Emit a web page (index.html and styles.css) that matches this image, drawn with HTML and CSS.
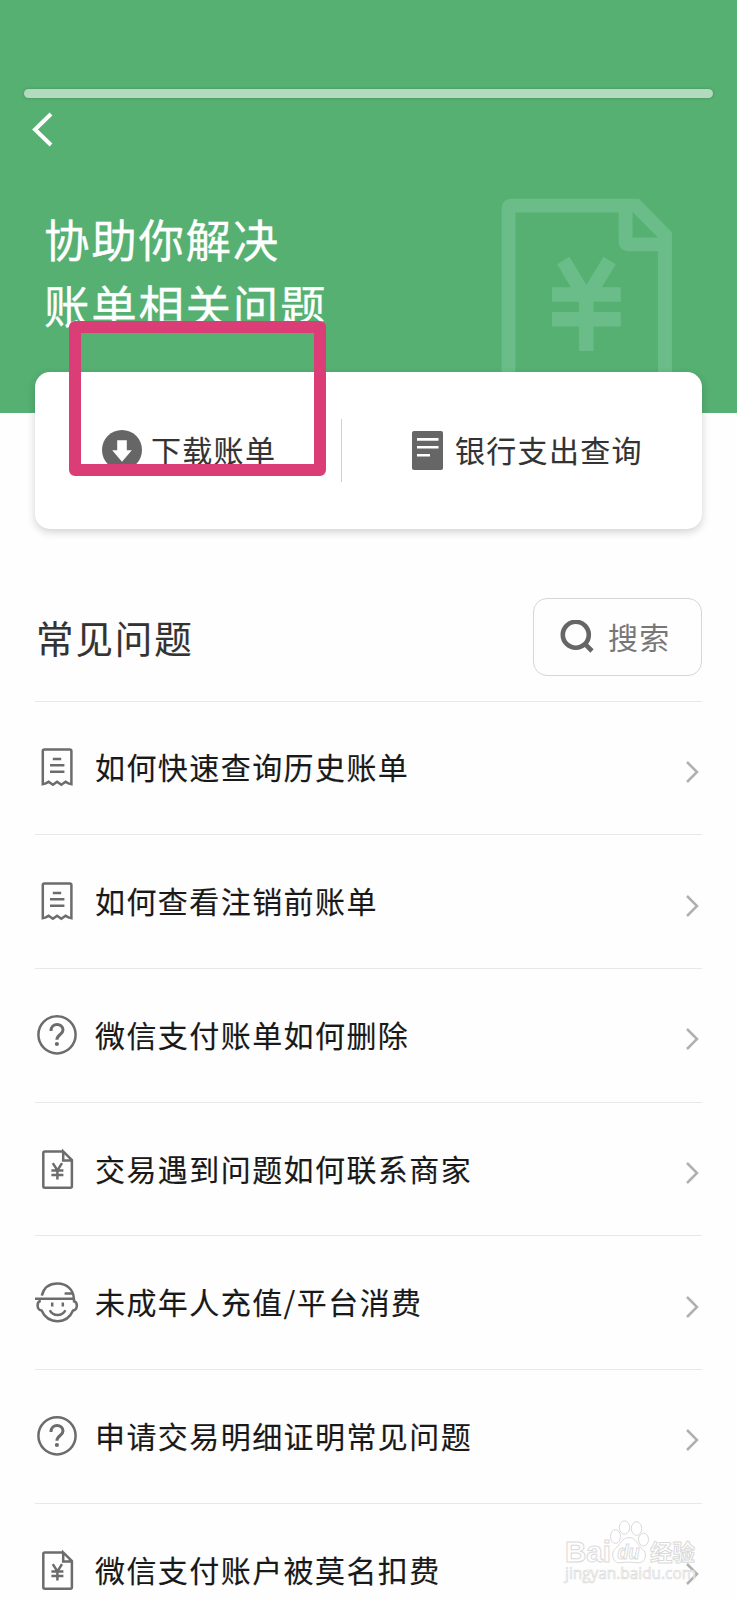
FILE: index.html
```
<!DOCTYPE html>
<html lang="zh-CN">
<head>
<meta charset="utf-8">
<title>账单</title>
<link rel="stylesheet" href="styles.css">
</head>
<body>
<svg class="defs" aria-hidden="true">
  <symbol id="receipt" viewBox="0 0 42 42">
    <path d="M7.8 37.2V4.2Q7.8 2.6 9.4 2.6H34.8Q36.4 2.6 36.4 4.2V37.2L33.4 36.4L30.6 34.8L26.3 37.8L22.1 34.8L17.9 37.8L13.6 34.8L10.8 36.4ZM17.8 12H26.2M15 18.2H29.4M15 24.8H29.4"/>
  </symbol>
  <symbol id="question" viewBox="0 0 42 42">
    <circle cx="22" cy="20.8" r="18.6"/>
    <path class="mark" d="M16 17C16 8.4 28 8.8 28 16C28 20.6 21.9 20.4 21.9 25.8"/>
    <circle class="dot" cx="21.9" cy="30" r="2.1"/>
  </symbol>
  <symbol id="bill" viewBox="0 0 42 42">
    <path d="M28.2 3.4H9.8Q8.3 3.4 8.3 4.9V38.2Q8.3 39.7 9.8 39.7H35.4Q36.9 39.7 36.9 38.2V12L28.2 3.4V12.4H36.9"/>
    <path d="M17.8 15.2L22.4 22.4L27 15.2M16.4 22.6H28.4M16.4 27H28.4M22.4 22.2V31.6"/>
  </symbol>
  <symbol id="kid" viewBox="0 0 44 42">
    <path d="M7.8 13.6C10 5.4 16 1.6 23.4 1.6C33 1.6 39.8 8 39.8 16.8M1 16.8H40M30.6 11.6H39M6.8 18.8C2.4 19.8 2.4 27.6 7.6 28.6C10.6 35.4 16 39.2 23.6 39.2C30.8 39.2 36.2 35.4 39 28.6C44 27.6 43.8 20 40 19.2V16.8M15.8 28.2C19 34.6 28.2 34.6 31.4 28.2"/>
    <path d="M18.2 20.6V24.4M28.8 20.6V24.4"/>
  </symbol>
</svg>

<header class="hero">
  <div class="progress"></div>
  <svg class="back" viewBox="0 0 24 36"><path d="M20 3L4 18.5L20 34"/></svg>
  <div class="hero-row">
    <h1 class="title">协助你解决<br>账单相关问题</h1>
    <svg class="hero-art" viewBox="0 0 171 215">
      <path d="M7.5 215V10Q7.5 7.7 10 7.7H135L164 37V215M124.6 7.7V44Q124.6 46.3 127 46.3H164"/>
      <path class="yen" d="M62.3 62.5L85.3 101L108.7 62.5M51 96.5H119.8M51 121.2H119.8M85.3 94V153"/>
    </svg>
  </div>
</header>

<main class="content">
  <section class="card">
    <div class="action action-download">
      <svg class="action-icon" viewBox="0 0 40 40"><circle cx="20" cy="20" r="20"/><path class="cut" d="M15.2 10.3H24.8V20.3H29.8L20 31.7L10.2 20.3H15.2Z"/></svg>
      <span class="action-label">下载账单</span>
    </div>
    <div class="divider"></div>
    <div class="action action-bank">
      <svg class="bank-icon" viewBox="0 0 31 39"><rect width="31" height="39" rx="2"/><path class="lines" d="M5 8.4H26.5M5 16.2H26.5M5 24.2H18"/></svg>
      <span class="action-label">银行支出查询</span>
    </div>
  </section>

  <div class="faq-head">
    <h2 class="faq-title">常见问题</h2>
    <div class="search">
      <svg class="search-icon" viewBox="0 0 34 34"><circle cx="15.8" cy="14.8" r="13"/><path d="M24.9 23.9L32 31"/></svg>
      <span class="search-label">搜索</span>
    </div>
  </div>

  <ul class="list">
    <li class="row"><svg class="icon"><use href="#receipt"/></svg><span class="label">如何快速查询历史账单</span><svg class="chev" viewBox="0 0 14 24"><path d="M2 2L12 12L2 22"/></svg></li>
    <li class="row"><svg class="icon"><use href="#receipt"/></svg><span class="label">如何查看注销前账单</span><svg class="chev" viewBox="0 0 14 24"><path d="M2 2L12 12L2 22"/></svg></li>
    <li class="row"><svg class="icon"><use href="#question"/></svg><span class="label">微信支付账单如何删除</span><svg class="chev" viewBox="0 0 14 24"><path d="M2 2L12 12L2 22"/></svg></li>
    <li class="row"><svg class="icon"><use href="#bill"/></svg><span class="label">交易遇到问题如何联系商家</span><svg class="chev" viewBox="0 0 14 24"><path d="M2 2L12 12L2 22"/></svg></li>
    <li class="row"><svg class="icon icon-kid"><use href="#kid"/></svg><span class="label">未成年人充值/平台消费</span><svg class="chev" viewBox="0 0 14 24"><path d="M2 2L12 12L2 22"/></svg></li>
    <li class="row"><svg class="icon"><use href="#question"/></svg><span class="label">申请交易明细证明常见问题</span><svg class="chev" viewBox="0 0 14 24"><path d="M2 2L12 12L2 22"/></svg></li>
    <li class="row"><svg class="icon"><use href="#bill"/></svg><span class="label">微信支付账户被莫名扣费</span><svg class="chev" viewBox="0 0 14 24"><path d="M2 2L12 12L2 22"/></svg></li>
  </ul>
</main>

<div class="highlight"></div>

<svg class="watermark" viewBox="0 0 140 68">
  <text class="wm-brand" x="1" y="42" textLength="46" lengthAdjust="spacingAndGlyphs">Bai</text>
  <ellipse cx="51.5" cy="16.5" rx="5" ry="6.8"/>
  <ellipse cx="60.5" cy="7.5" rx="5.2" ry="6.6"/>
  <ellipse cx="72.5" cy="8.5" rx="5.2" ry="6.8"/>
  <ellipse cx="79.5" cy="19.5" rx="5" ry="6.4"/>
  <path d="M65 17.5C58 17.5 56 25 51.5 28.5C46 33 49 43.5 56 42.8C62 42 68 42 74 42.8C82 43.5 84 33 78 28.5C73 25 72 17.5 65 17.5Z"/>
  <text class="wm-du" x="53.5" y="38.5" textLength="22" lengthAdjust="spacingAndGlyphs">du</text>
  <text class="wm-cn" x="86" y="41" textLength="45" lengthAdjust="spacingAndGlyphs">经验</text>
  <text class="wm-url" x="1" y="59" textLength="131" lengthAdjust="spacingAndGlyphs">jingyan.baidu.com</text>
</svg>
</body>
</html>
```

FILE: styles.css
```
* { box-sizing: border-box; }

body {
  margin: 0;
  position: relative;
  width: 737px;
  height: 1600px;
  overflow: hidden;
  background: #fefefe;
  color: #333;
  font-family: "Noto Sans CJK SC", sans-serif;
}

svg { display: block; flex: none; }
.defs { position: absolute; width: 0; height: 0; }

.hero {
  height: 413px;
  padding: 89px 24px 0;
  background: #56b072;
  overflow: hidden;
}

.progress {
  height: 9px;
  border-radius: 5px;
  background: #b4dabd;
  box-shadow: 0 0 3px rgba(30, 90, 50, .4);
}

.back {
  width: 24px;
  height: 36px;
  margin: 13px 0 0 7px;
  fill: none;
  stroke: #fff;
  stroke-width: 4;
}

.hero-row {
  display: flex;
  align-items: flex-start;
  justify-content: space-between;
  padding: 51px 41px 0 20px;
}

.title {
  margin: 8px 0 0;
  color: #fff;
  font-size: 45.5px;
  font-weight: 400;
  line-height: 65.5px;
  letter-spacing: 1.7px;
  -webkit-text-stroke: .3px currentColor;
}

.hero-art {
  width: 171px;
  height: 215px;
  fill: none;
  stroke: #6abd88;
  stroke-width: 13.8;
}
.hero-art .yen { stroke-width: 14.5; }

.content { padding: 0 35px; }

.card {
  position: relative;
  display: flex;
  align-items: center;
  height: 157px;
  margin-top: -41px;
  border-radius: 15px;
  background: #fff;
  box-shadow: 0 3px 9px rgba(0, 0, 0, .18);
  font-size: 30px;
  letter-spacing: 1.3px;
  line-height: 44px;
}

.action { display: flex; align-items: center; }
.action-download { width: 306px; padding-left: 67px; gap: 9px; }
.action-bank { padding-left: 70px; gap: 12px; }
.action-label { padding-bottom: 3px; -webkit-text-stroke: .12px currentColor; }
.action-icon { width: 40px; height: 40px; margin-bottom: 1px; fill: #666; }
.bank-icon { width: 31px; height: 39px; fill: #666; }
.cut { fill: #fff; }
.lines { stroke: #fff; stroke-width: 2.6; }
.divider { width: 1px; height: 63px; background: #d0d0d0; }

.faq-head {
  display: flex;
  align-items: center;
  justify-content: space-between;
  margin-top: 69px;
  height: 78px;
}

.faq-title {
  margin: 0 0 1px 1px;
  font-size: 37.5px;
  font-weight: 400;
  letter-spacing: 1.9px;
  line-height: 56px;
  -webkit-text-stroke: .15px currentColor;
}

.search {
  display: flex;
  align-items: center;
  gap: 14px;
  width: 169px;
  height: 78px;
  padding-left: 26px;
  border: 1px solid #d6d6d6;
  border-radius: 14px;
  color: #777;
  font-size: 30px;
  letter-spacing: 1.3px;
}
.search-label { padding-bottom: 3px; }
.search-icon { width: 34px; height: 34px; fill: none; stroke: #666; stroke-width: 4.6; }

.list {
  margin: 24.6px 0 0;
  padding: 0;
  list-style: none;
}

.row {
  display: flex;
  align-items: center;
  height: 133.7px;
  border-top: 1px solid #e8e8e8;
  color: #191919;
  font-size: 30px;
  letter-spacing: 1.43px;
}

.icon {
  width: 42px;
  height: 42px;
  fill: none;
  stroke: #6c6c6c;
  stroke-width: 2.5;
}
.mark { stroke-width: 3; }
.dot { fill: #6c6c6c; stroke: none; }
.icon-kid { width: 44px; margin: 0 -1px 0 -1px; }
.label {
  flex: 1;
  margin-left: 18px;
  padding-bottom: 3px;
  -webkit-text-stroke: .15px currentColor;
}
.chev {
  width: 14px;
  height: 24px;
  margin: 8px 3.5px 0 0;
  fill: none;
  stroke: #b0b0b0;
  stroke-width: 2.5;
}

/* Marker frame laid over the download action */
.highlight {
  position: absolute;
  left: 69px;
  top: 321px;
  width: 257px;
  height: 155px;
  border: 12px solid #db3e77;
  border-radius: 6px;
}

.watermark {
  position: absolute;
  left: 564px;
  top: 1520px;
  width: 140px;
  height: 68px;
  overflow: visible;
  fill: rgba(255, 255, 255, .75);
  stroke: #dadada;
  stroke-width: 1;
}
.wm-brand { font: 700 30px "Liberation Sans", sans-serif; }
.wm-du { font: italic 700 20px "Liberation Sans", sans-serif; }
.wm-cn { font: 700 23px "Noto Sans CJK SC", sans-serif; }
.wm-url { font: 400 17px "Open Sans", sans-serif; stroke-width: .7; }
```
